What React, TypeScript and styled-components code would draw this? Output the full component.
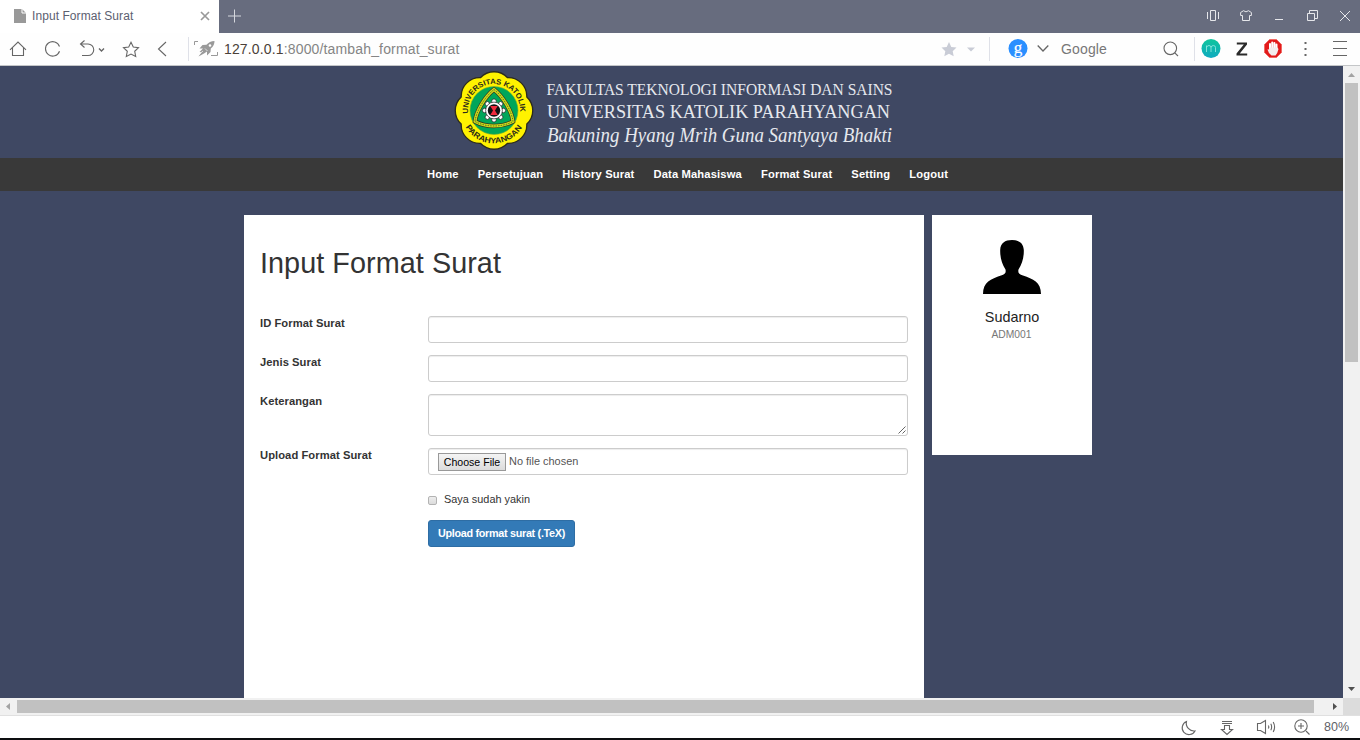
import React from 'react';
import styled, { createGlobalStyle } from 'styled-components';

const GlobalStyle = createGlobalStyle`
  * { box-sizing: border-box; }
  body {
    margin: 0;
    overflow: hidden;
    font-family: "Liberation Sans", Arial, sans-serif;
    color: #333;
  }
`;

const Window = styled.div`
  display: flex;
  flex-direction: column;
  width: 1360px;
  height: 740px;
  background: #fff;
  overflow: hidden;
  border-bottom: 2px solid #0d0e10;
`;

const TabStrip = styled.div`
  display: flex;
  flex: none;
  height: 33px;
  background: #676c7e;
`;

const Tab = styled.div`
  display: flex;
  align-items: center;
  width: 219px;
  padding: 0 9px 1px 14px;
  background: #fff;
  font-size: 12px;
  letter-spacing: 0.07px;
  color: #5c6070;
`;

const TabTitle = styled.span`
  flex: 1;
  margin-left: 6px;
`;

const WindowControls = styled.div`
  display: flex;
  margin-left: auto;
  padding-bottom: 2px;
`;

const Toolbar = styled.div`
  display: flex;
  align-items: center;
  flex: none;
  height: 33px;
  border-bottom: 1px solid #c4c6c8;
  background: #fefefe;
`;

const Slot = styled.div<{ $w: number; $ml?: number }>`
  display: flex;
  align-items: center;
  justify-content: center;
  flex: none;
  width: ${(p) => p.$w}px;
  margin-left: ${(p) => p.$ml ?? 0}px;
  svg { display: block; overflow: visible; }
`;

const Divider = styled.div`
  flex: none;
  width: 1px;
  height: 24px;
  background: #dfe1e8;
`;

const Address = styled.div`
  flex: none;
  width: 717px;
  padding-left: 6px;
  font-size: 14px;
  letter-spacing: 0.15px;
  color: #858585;
  b { font-weight: 400; color: #4a4038; }
`;

const SearchText = styled.div`
  width: 97px;
  margin-left: 12px;
  font-size: 14px;
  letter-spacing: 0.15px;
  color: #777;
`;

const Viewport = styled.div`
  display: flex;
  flex: none;
  height: 632px;
`;

const Page = styled.div`
  display: flex;
  flex-direction: column;
  width: 1343px;
  background: #3f4863;
  overflow: hidden;
`;

const Banner = styled.header`
  flex: none;
  height: 92px;
  padding-left: 450px;
  svg { display: block; overflow: visible; }
`;

const Nav = styled.nav`
  display: flex;
  flex: none;
  align-items: center;
  gap: 19px;
  height: 33px;
  padding: 0 0 2px 427px;
  background: #393939;
`;

const NavLink = styled.a`
  font-size: 11.2px;
  font-weight: 700;
  letter-spacing: 0.145px;
  color: #fff;
  white-space: nowrap;
`;

const Columns = styled.div`
  display: flex;
  align-items: flex-start;
  flex: 1;
  gap: 8px;
  padding: 24px 0 0 244px;
`;

const Panel = styled.main`
  align-self: stretch;
  width: 680px;
  padding: 32px 16px 0;
  background: #fff;
`;

const Heading = styled.h1`
  margin: 0 0 37px;
  font-size: 28.8px;
  line-height: 32px;
  font-weight: 400;
  letter-spacing: 0.05px;
`;

const Row = styled.div<{ $h: number }>`
  display: grid;
  grid-template-columns: 168px 480px;
  height: ${(p) => p.$h}px;
  margin-bottom: 12px;
`;

const Label = styled.label`
  font-size: 11.2px;
  line-height: 14px;
  font-weight: 700;
  letter-spacing: 0.06px;
`;

const fieldBorder = `
  border: 1px solid #ccc;
  border-radius: 3px;
  background: #fff;
  box-shadow: inset 0 1px 1px rgba(0, 0, 0, 0.075);
`;

const TextInput = styled.input`
  ${fieldBorder}
  width: 100%;
  height: 100%;
  outline: none;
`;

const AreaBox = styled.div`
  ${fieldBorder}
  display: flex;
  align-items: flex-end;
  justify-content: flex-end;
  padding: 0 1px 1px 0;
`;

const FileBox = styled.div`
  ${fieldBorder}
  display: flex;
  align-items: center;
  padding-left: 9px;
  font-size: 10.95px;
  color: #555;
`;

const FileButton = styled.button`
  width: 68px;
  height: 18px;
  margin: 1px 3px 0 0;
  padding: 0;
  border: 1px solid #999;
  border-radius: 0;
  background: linear-gradient(#f4f4f4, #dcdcdc);
  font: 10.6px "Liberation Sans", Arial, sans-serif;
  color: #000;
`;

const FileStatus = styled.span`
  margin-top: -1px;
`;

const CheckRow = styled.div`
  display: flex;
  align-items: center;
  height: 14px;
  margin: 17px 0 14px 168px;
  font-size: 10.9px;
`;

const CheckBox = styled.span`
  width: 9px;
  height: 9px;
  margin: 3px 7px 0 0;
  border: 1px solid #b3b3b3;
  border-radius: 2px;
  background: linear-gradient(#ededed, #dcdcdc);
`;

const Submit = styled.button`
  display: block;
  width: 147px;
  height: 27px;
  margin-left: 168px;
  padding: 0 0 2px;
  border: 1px solid #2e6da4;
  border-radius: 3px;
  background: #337ab7;
  color: #fff;
  font: 700 10.8px "Liberation Sans", Arial, sans-serif;
  letter-spacing: -0.3px;
  white-space: nowrap;
`;

const Profile = styled.aside`
  display: flex;
  flex-direction: column;
  align-items: center;
  width: 160px;
  height: 240px;
  padding-top: 25px;
  background: #fff;
`;

const ProfileName = styled.div`
  margin-top: 15px;
  font-size: 14.4px;
  line-height: 17px;
  color: #222;
`;

const ProfileId = styled.div`
  margin-top: 3px;
  padding-right: 1px;
  font-size: 10.3px;
  line-height: 12px;
  color: #777;
`;

const VerticalBar = styled.div`
  display: flex;
  flex-direction: column;
  align-items: center;
  width: 17px;
  background: #f1f1f1;
`;

const VerticalThumb = styled.div`
  width: 13px;
  height: 279px;
  background: #c1c1c1;
`;

const BarArrow = styled.div`
  display: flex;
  align-items: center;
  justify-content: center;
  width: 17px;
  height: 17px;
`;

const Spacer = styled.div`
  flex: 1;
`;

const HorizontalBar = styled.div`
  display: flex;
  align-items: center;
  flex: none;
  height: 18px;
  border-bottom: 1px solid #e0e0e0;
  background: #f1f1f1;
`;

const HorizontalThumb = styled.div`
  width: 1297px;
  height: 13px;
  background: #c1c1c1;
`;

const Corner = styled.div`
  width: 17px;
  height: 17px;
  background: #dcdcdc;
`;

const StatusBar = styled.div`
  display: flex;
  align-items: center;
  flex: 1;
  padding-left: 1176px;
  font-size: 12.5px;
  color: #5f6268;
`;

const Zoom = styled.span`
  margin-left: 14px;
`;

type IconProps = {
  w: number;
  h: number;
  color?: string;
  sw?: number;
  children: React.ReactNode;
};

const Icon = ({ w, h, color = '#666', sw = 1.1, children }: IconProps) => (
  <svg width={w} height={h} viewBox={`0 0 ${w} ${h}`} fill="none" stroke={color} strokeWidth={sw}>
    {children}
  </svg>
);

const Arrow = ({ dir, color }: { dir: 'up' | 'down' | 'left' | 'right'; color: string }) => {
  const shapes = {
    up: 'M1 7 4.5 3 8 7z',
    down: 'M1 2 8 2 4.5 6z',
    left: 'M6 1 6 8 2 4.5z',
    right: 'M3 1 3 8 7 4.5z',
  };
  return (
    <svg width="9" height="9">
      <path d={shapes[dir]} fill={color} />
    </svg>
  );
};

// Eight round petals meeting on a circle of radius 35.5.
const petals = Array.from({ length: 9 }, (_, i) => {
  const a = ((i * 45 - 22.5) * Math.PI) / 180;
  const x = (35.5 * Math.sin(a)).toFixed(2);
  const y = (-35.5 * Math.cos(a)).toFixed(2);
  return i === 0 ? `M${x} ${y}` : `A18.5 18.5 0 0 1 ${x} ${y}`;
}).join(' ') + 'Z';

const spokes = [0, 45, 90, 135, 180, 225, 270, 315];
const leaf = 'M0 -21 C9 -14 18 1 19 11 C8 17 -8 17 -19 11 C-18 1 -9 -14 0 -21Z';

const BannerLogo = () => (
  <svg width="450" height="92" viewBox="0 0 450 92">
    <defs>
      <path id="ringTop" d="M18.400 48.500 A26 26 0 1 1 69.600 48.500" />
      <path id="ringBottom" d="M15 60 A33 33 0 0 0 73 60" />
    </defs>
    <g transform="translate(44 44.500)">
      <path d={petals} fill="#fff200" stroke="#2c2b1c" strokeWidth="1.300" strokeLinejoin="round" />
      <circle r="24" fill="#00a65a" stroke="#7fae2c" strokeWidth="0.600" />
      <path d={leaf} fill="#00a65a" stroke="#333a1d" strokeWidth="4.400" />
      <path d={leaf} fill="none" stroke="#d3da18" strokeWidth="3" />
      <path d={leaf} fill="none" stroke="#447327" strokeWidth="0.900" strokeDasharray="1.600 1" />
      {spokes.map((a) => (
        <circle key={a} cy="-9.300" r="2.300" fill="#fff" stroke="#222" strokeWidth="0.700" transform={`rotate(${a})`} />
      ))}
      <circle r="8.400" fill="#fff" stroke="#222" strokeWidth="0.700" />
      <circle r="6.200" fill="#111" />
      <path d="M-3.700 -4.600H3.700L1 0L3.700 4.600H-3.700L-1 0Z" fill="#ef2b3d" />
    </g>
    <g fill="#29291a" fontFamily="Liberation Sans, Arial, sans-serif" fontWeight="700">
      <text fontSize="7.600">
        <textPath href="#ringTop" startOffset="1" textLength="87" lengthAdjust="spacingAndGlyphs">UNIVERSITAS KATOLIK</textPath>
      </text>
      <text fontSize="8">
        <textPath href="#ringBottom" startOffset="1" textLength="68" lengthAdjust="spacingAndGlyphs">PARAHYANGAN</textPath>
      </text>
    </g>
    <g fill="#e6e8ee" fontFamily="Liberation Serif, Times New Roman, serif">
      <text x="96.500" y="29.300" fontSize="16.500" textLength="346" lengthAdjust="spacingAndGlyphs">FAKULTAS TEKNOLOGI INFORMASI DAN SAINS</text>
      <text x="97" y="52" fontSize="19" textLength="343" lengthAdjust="spacingAndGlyphs">UNIVERSITAS KATOLIK PARAHYANGAN</text>
      <text x="97" y="75.500" fontSize="21" fontStyle="italic" textLength="345" lengthAdjust="spacingAndGlyphs">Bakuning Hyang Mrih Guna Santyaya Bhakti</text>
    </g>
  </svg>
);

const links = ['Home', 'Persetujuan', 'History Surat', 'Data Mahasiswa', 'Format Surat', 'Setting', 'Logout'];

export default function App() {
  return (
    <Window>
      <GlobalStyle />
      <TabStrip>
        <Tab>
          <svg width="12" height="14"><path d="M0 0H8L12 4V14H0Z" fill="#999" /><path d="M8 0V4H12" fill="none" stroke="#fff" /></svg>
          <TabTitle>Input Format Surat</TabTitle>
          <Icon w={10} h={10} color="#999" sw={1.7}><path d="M1 1 9 9M9 1 1 9" /></Icon>
        </Tab>
        <Slot $w={30}>
          <Icon w={13} h={13} color="#d5d7dd" sw={1}><path d="M6.500 -.5V12.500M0 6H13" /></Icon>
        </Slot>
        <WindowControls>
          <Slot $w={32}>
            <Icon w={12} h={11} color="#e6e7eb" sw={1}><path d="M.5 2V9M11.500 2V9M3.500 .5H8.500V10.500H3.500Z" /></Icon>
          </Slot>
          <Slot $w={34}>
            <Icon w={12} h={11} color="#e6e7eb" sw={1}><path d="M3.500 .7 .6 2.500V5.500H2.500V10.500H9.500V5.500H11.400V2.500L8.500 .7Q6 3 3.500 .7Z" /></Icon>
          </Slot>
          <Slot $w={33}>
            <Icon w={9} h={9} color="#e6e7eb" sw={1}><path d="M0 8.500H8" /></Icon>
          </Slot>
          <Slot $w={33}>
            <Icon w={11} h={11} color="#e6e7eb" sw={1}><path d="M.5 3.500H7.500V10.500H.5ZM2.500 3V.5H10.500V8.500H8" /></Icon>
          </Slot>
          <Slot $w={31}>
            <Icon w={10} h={10} color="#e6e7eb" sw={1}><path d="M0 0 10 10M10 0 0 10" /></Icon>
          </Slot>
        </WindowControls>
      </TabStrip>
      <Toolbar>
        <Slot $w={18} $ml={9}>
          <Icon w={18} h={16}><path d="M1 8.800 9 1 17 8.800M3.500 6.800V14.500H14.500V6.800" /></Icon>
        </Slot>
        <Slot $w={18} $ml={16}>
          <Icon w={17} h={16}><path d="M15.500 10.200A7.200 7.200 0 1 1 15.500 5.500" /></Icon>
        </Slot>
        <Slot $w={26} $ml={18}>
          <Icon w={26} h={16}>
            <path d="M5.500 -.5 1.500 3 5.500 6.500M1.500 3H9A5.600 5.600 0 0 1 9 14.500H3" />
            <path d="M20 7.500 22.500 10 25 7.500" strokeWidth="1.400" />
          </Icon>
        </Slot>
        <Slot $w={18} $ml={17}>
          <Icon w={18} h={17}><path d="M9 1.200 11.300 6 16.500 6.700 12.700 10.300 13.700 15.500 9 13 4.300 15.500 5.300 10.300 1.500 6.700 6.700 6Z" /></Icon>
        </Slot>
        <Slot $w={12} $ml={16}>
          <Icon w={10} h={16}><path d="M9 1 1.500 8 9 15" /></Icon>
        </Slot>
        <Slot $w={1} $ml={20}><Divider /></Slot>
        <Slot $w={24} $ml={5}>
          <svg width="24" height="16" viewBox="0 0 24 16">
            <path d="M.5 4V.5H4M23.500 11V14.500H17" fill="none" stroke="#999" />
            <path d="M20.500 0Q15.500 .3 12.500 3.700L8.500 4 5.500 7.500 9 7.500 5.500 11 7.500 11.200 4.500 15.500 10 12.500 11.500 11.500 13 10.500V14.500L16.500 11 16.800 7.500Q20.500 5 20.500 0Z" fill="#999" />
            <path d="M9 10 5 13.500M11 7.500 13.500 10" stroke="#fff" strokeWidth=".7" />
            <circle cx="16" cy="4.500" r="1.300" fill="#fff" />
          </svg>
        </Slot>
        <Address><b>127.0.0.1</b>:8000/tambah_format_surat</Address>
        <Slot $w={16} $ml={6}>
          <svg width="16" height="15"><path d="M8 0 10.300 5 15.500 5.600 11.700 9.200 12.700 14.300 8 11.800 3.300 14.300 4.300 9.200 .5 5.600 5.700 5Z" fill="#c9ccd6" /></svg>
        </Slot>
        <Slot $w={10} $ml={9}>
          <svg width="8" height="4"><path d="M0 .5H8L4 4.500Z" fill="#c9ccd6" /></svg>
        </Slot>
        <Slot $w={1} $ml={13}><Divider /></Slot>
        <Slot $w={20} $ml={18}>
          <svg width="20" height="20">
            <circle cx="10" cy="9.500" r="9.500" fill="#2a8fff" />
            <text x="10" y="13.500" textAnchor="middle" fontFamily="Liberation Serif, serif" fontSize="17" fill="#fff" stroke="#fff" strokeWidth=".2">g</text>
          </svg>
        </Slot>
        <Slot $w={13} $ml={8}>
          <Icon w={12} h={8} sw={1.300}><path d="M.7 .5 6 6 11.300 .5" /></Icon>
        </Slot>
        <SearchText>Google</SearchText>
        <Slot $w={16} $ml={5}>
          <Icon w={16} h={16}><circle cx="7.300" cy="7.300" r="6.300" /><path d="M11.800 11.800 15 15" /></Icon>
        </Slot>
        <Slot $w={1} $ml={15}><Divider /></Slot>
        <Slot $w={20} $ml={6}>
          <svg width="20" height="20">
            <defs>
              <linearGradient id="teal" x2="0" y2="1"><stop stopColor="#0fc59c" /><stop offset="1" stopColor="#10aac0" /></linearGradient>
            </defs>
            <circle cx="10" cy="9.500" r="9.500" fill="url(#teal)" />
            <path d="M5.500 13V6.500M5.500 8.500Q6 6.500 8 6.500 10 6.500 10 8.500V13M10 8.500Q10.500 6.500 12.300 6.500 14.500 6.500 14.500 8.500V13" fill="none" stroke="#8de6df" strokeWidth=".9" />
          </svg>
        </Slot>
        <Slot $w={12} $ml={15}>
          <svg width="12" height="14"><path d="M.8 .5H11V2.500L3.800 11.500H11.200V13.500H.5V11.500L7.800 2.500H.8Z" fill="#2a2a2a" /></svg>
        </Slot>
        <Slot $w={20} $ml={15}>
          <svg width="20" height="20">
            <path d="M6.500 .5H13.500L18.500 5.500V13.500L13.500 18.500H6.500L1.500 13.500V5.500Z" fill="#e21b1b" stroke="#ef5b55" strokeWidth=".7" />
            <path d="M7 10V5M9.200 9V3.500M11.400 9V4M13.500 10V5.500" stroke="#fff" strokeWidth="2" strokeLinecap="round" />
            <path d="M6 8.500H14.400L15.500 10Q14.500 14.500 12.500 16.500H8.500Q5 13.500 4.500 10.500Q5.500 10 6.500 11Z" fill="#f3eeee" />
          </svg>
        </Slot>
        <Slot $w={4} $ml={20}>
          <svg width="3" height="16"><path d="M.5 1H2.500V3H.5ZM.5 7H2.500V9H.5ZM.5 13H2.500V15H.5Z" fill="#666" /></svg>
        </Slot>
        <Slot $w={16} $ml={25}>
          <Icon w={14} h={16} sw={1}><path d="M0 .5H14M0 7.500H14M0 14.500H14" /></Icon>
        </Slot>
      </Toolbar>
      <Viewport>
        <Page>
          <Banner><BannerLogo /></Banner>
          <Nav>
            {links.map((text) => <NavLink key={text}>{text}</NavLink>)}
          </Nav>
          <Columns>
            <Panel>
              <Heading>Input Format Surat</Heading>
              <Row $h={27}><Label>ID Format Surat</Label><TextInput /></Row>
              <Row $h={27}><Label>Jenis Surat</Label><TextInput /></Row>
              <Row $h={42}>
                <Label>Keterangan</Label>
                <AreaBox>
                  <Icon w={8} h={8} color="#555" sw={0.9}><path d="M.5 7.500 7.500 .5M4.500 7.500 7.500 4.500" /></Icon>
                </AreaBox>
              </Row>
              <Row $h={27}>
                <Label>Upload Format Surat</Label>
                <FileBox>
                  <FileButton>Choose File</FileButton>
                  <FileStatus>No file chosen</FileStatus>
                </FileBox>
              </Row>
              <CheckRow><CheckBox />Saya sudah yakin</CheckRow>
              <Submit>Upload format surat (.TeX)</Submit>
            </Panel>
            <Profile>
              <svg width="58" height="54" viewBox="0 0 58 54">
                <path d="M29 0C36 0 40.500 3 40.800 10C41 18 39 24 35.500 29.500C34.800 33 36 34 40 35.500C50 39 58 42 58 54H0C0 42 8 39 18 35.500C22 34 23.200 33 22.500 29.500C19 24 17 18 17.200 10C17.500 3 22 0 29 0Z" fill="#000" />
              </svg>
              <ProfileName>Sudarno</ProfileName>
              <ProfileId>ADM001</ProfileId>
            </Profile>
          </Columns>
        </Page>
        <VerticalBar>
          <BarArrow><Arrow dir="up" color="#a3a3a3" /></BarArrow>
          <VerticalThumb />
          <Spacer />
          <BarArrow><Arrow dir="down" color="#505050" /></BarArrow>
        </VerticalBar>
      </Viewport>
      <HorizontalBar>
        <BarArrow><Arrow dir="left" color="#a3a3a3" /></BarArrow>
        <HorizontalThumb />
        <Spacer />
        <BarArrow><Arrow dir="right" color="#505050" /></BarArrow>
        <Corner />
      </HorizontalBar>
      <StatusBar>
        <Slot $w={24}>
          <Icon w={15} h={15}><path d="M5.500 1.500A6.800 6.800 0 1 0 14 11 7.800 7.800 0 0 1 5.500 1.500Z" /></Icon>
        </Slot>
        <Slot $w={14} $ml={20}>
          <Icon w={14} h={15}><path d="M2 1.500H12M2 3.500H12M4.500 5.500H9.500V9.500H12.500L7 14.500 1.500 9.500H4.500Z" /></Icon>
        </Slot>
        <Slot $w={20} $ml={22}>
          <Icon w={20} h={14}><path d="M1.500 3.500H4.500L9.500 .5V13.500L4.500 10.500H1.500ZM12.300 5.500Q13.300 7 12.300 8.500M14.800 3.800Q16.500 7 14.800 10.200M17.200 2Q20 7 17.200 12" /></Icon>
        </Slot>
        <Slot $w={16} $ml={18}>
          <Icon w={16} h={16}><circle cx="7" cy="7" r="6.200" /><path d="M12 12 15.500 15.500M4 7H10M7 4V10" /></Icon>
        </Slot>
        <Zoom>80%</Zoom>
      </StatusBar>
    </Window>
  );
}
